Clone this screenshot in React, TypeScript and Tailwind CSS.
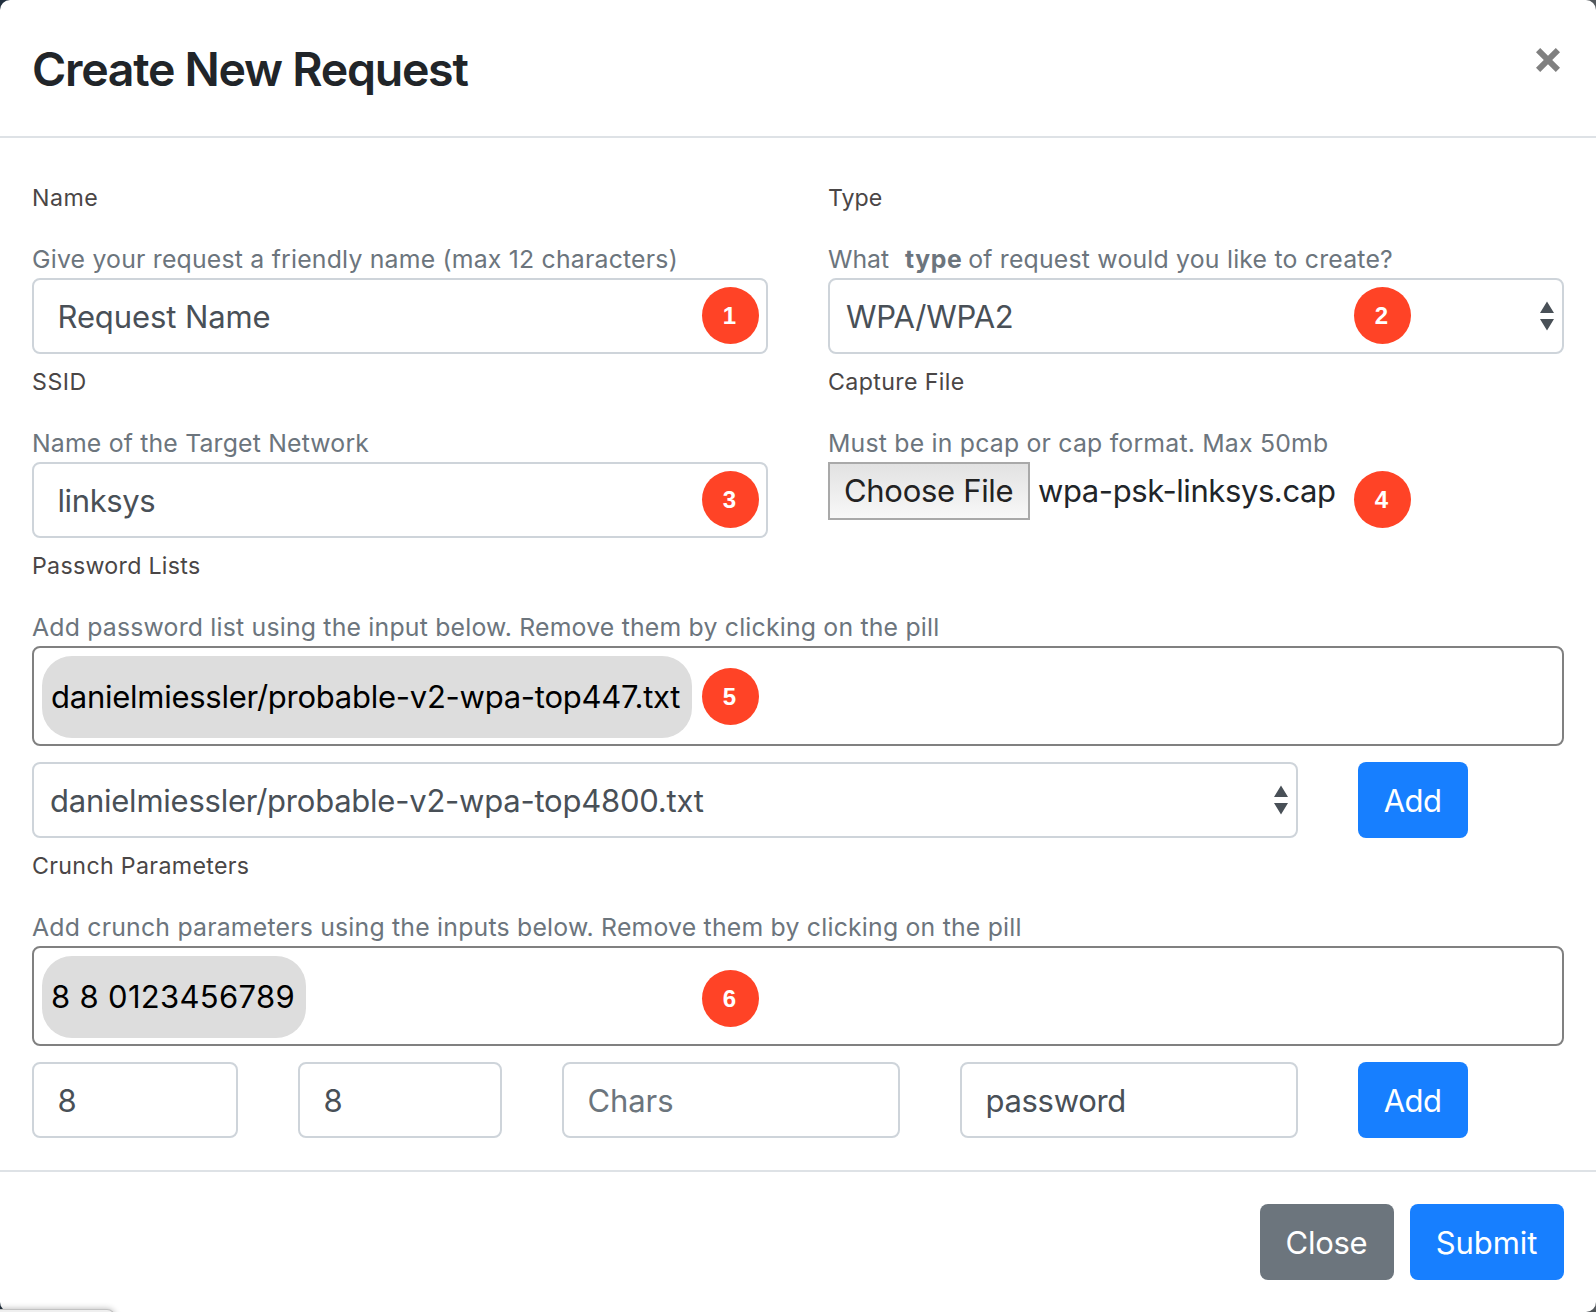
import type { ReactNode } from "react";

function Badge({ n, className }: { n: number; className: string }) {
  return (
    <span
      className={`absolute flex size-[57px] items-center justify-center rounded-full bg-[#ff4326] pt-px pr-[2px] font-['Liberation_Sans',sans-serif] text-[24px] leading-none font-bold text-white ${className}`}
    >
      {n}
    </span>
  );
}

function Group({
  label,
  help,
  labelClass = "tracking-[0.29px]",
  helpClass = "tracking-[0.21px]",
  children,
}: {
  label: string;
  help: ReactNode;
  labelClass?: string;
  helpClass?: string;
  children: ReactNode;
}) {
  return (
    <div className="flex flex-col">
      <label className={`text-[23.2px] leading-9 whitespace-nowrap text-[#4a4646] ${labelClass}`}>{label}</label>
      <small className={`mt-[25px] mb-px text-[24.8px] leading-9 whitespace-pre text-[#6c757d] ${helpClass}`}>{help}</small>
      {children}
    </div>
  );
}

function Field({ children, className = "" }: { children: ReactNode; className?: string }) {
  return (
    <div
      className={`relative flex h-[76px] items-center rounded-lg border-2 border-[#ced4da] bg-white pt-0.5 pl-[23.5px] text-[31px] whitespace-nowrap text-[#495057] ${className}`}
    >
      {children}
    </div>
  );
}

function Select({ children, className = "" }: { children: ReactNode; className?: string }) {
  return (
    <div
      className={`relative flex h-[76px] items-center justify-between rounded-lg border-2 border-[#ced4da] bg-white pr-[8.5px] text-[31px] whitespace-nowrap text-[#495057] ${className}`}
    >
      {children}
      <svg width="14" height="30" viewBox="0 0 14 30" fill="#495057">
        <path d="M7 0.5 L14 12 H0 Z M0 18 H14 L7 29.5 Z" />
      </svg>
    </div>
  );
}

function PillBox({ text, className, badge }: { text: string; className: string; badge: ReactNode }) {
  return (
    <div className="relative h-[100px] rounded-lg border-2 border-[#808080] py-2 pl-2">
      <span
        className={`flex h-[82px] items-center rounded-[30px] bg-[#ddd] text-[31px] whitespace-nowrap text-black ${className}`}
      >
        {text}
      </span>
      {badge}
    </div>
  );
}

function Button({ children, className }: { children: ReactNode; className: string }) {
  return (
    <button className={`flex h-[76px] items-center justify-center rounded-lg pt-0.5 pr-px text-[31px] text-white ${className}`}>
      {children}
    </button>
  );
}

export default function App() {
  return (
    <div className="relative h-[1312px] w-[1596px] overflow-hidden bg-linear-to-r from-[#22303f] to-[#53585c] font-['Inter',sans-serif]">
      <div className="flex h-full flex-col rounded-[10px] bg-white">
        <header className="flex h-[138px] items-start justify-between border-b-2 border-[#dee2e6] pr-9 pl-8">
          <h1 className="mt-[39px] text-[46.5px] leading-[60px] font-semibold tracking-[-1.28px] text-[#212529]">
            Create New Request
          </h1>
          <svg className="mt-12" width="24" height="24" viewBox="0 0 24 24" aria-label="Close">
            <path
              d="M4.2 0 L12 7.8 L19.8 0 L24 4.2 L16.2 12 L24 19.8 L19.8 24 L12 16.2 L4.2 24 L0 19.8 L7.8 12 L0 4.2 Z"
              fill="#808080"
            />
          </svg>
        </header>

        <main className="flex flex-col gap-2.5 px-8 pt-[42px] pb-8">
          <div className="grid grid-cols-2 gap-x-15 gap-y-2.5">
            <Group label="Name" labelClass="tracking-[0.5px]" help="Give your request a friendly name (max 12 characters)">
              <Field>
                <span className="tracking-[-0.1px]">Request Name</span>
                <Badge n={1} className="top-[7px] right-[7px]" />
              </Field>
            </Group>
            <Group
              label="Type"
              labelClass="tracking-normal"
              help={
                <>
                  <span className="tracking-normal">{"What  "}</span>
                  <b className="ml-0.5 font-bold tracking-[0.6px]">type</b>
                  <span className="-ml-[1.5px]"> of request would you like to create?</span>
                </>
              }
            >
              <Select className="pl-4">
                <span className="pt-0.5 tracking-[-0.26px]">WPA/WPA2</span>
                <Badge n={2} className="top-[7px] left-[524px]" />
              </Select>
            </Group>
            <Group label="SSID" labelClass="tracking-[0.5px]" help="Name of the Target Network" helpClass="tracking-[0.18px]">
              <Field>
                <span className="tracking-[-0.4px]">linksys</span>
                <Badge n={3} className="top-[7px] right-[7px]" />
              </Field>
            </Group>
            <Group label="Capture File" labelClass="tracking-[0.36px]" help="Must be in pcap or cap format. Max 50mb">
              <div className="relative flex items-start text-[31px] whitespace-nowrap">
                <button className="flex h-[58px] w-[202px] items-center border-2 border-[#a9a9a9] bg-linear-to-b from-[#e2e2e2] to-[#f8f8f8] pl-[14px] tracking-[-0.31px] text-[#222]">
                  Choose File
                </button>
                <span className="ml-2 leading-[58px] tracking-[-0.41px] text-[#212529]">wpa-psk-linksys.cap</span>
                <Badge n={4} className="top-[9px] left-[526px]" />
              </div>
            </Group>
          </div>

          <Group
            label="Password Lists"
            help="Add password list using the input below. Remove them by clicking on the pill"
            helpClass="tracking-[0.2px]"
          >
            <PillBox
              text="danielmiessler/probable-v2-wpa-top447.txt"
              className="w-[650px] pl-[9px] tracking-[-0.255px]"
              badge={<Badge n={5} className="top-[20px] left-[668px]" />}
            />
            <div className="mt-4 flex">
              <Select className="w-[1266px] pl-[16px]">
                <span className="pt-0.5 tracking-[-0.235px]">danielmiessler/probable-v2-wpa-top4800.txt</span>
              </Select>
              <Button className="ml-15 w-[110px] bg-[#177fff] tracking-[-0.6px]">Add</Button>
            </div>
          </Group>

          <Group
            label="Crunch Parameters"
            labelClass="tracking-[0.33px]"
            help="Add crunch parameters using the inputs below. Remove them by clicking on the pill"
          >
            <PillBox
              text="8 8 0123456789"
              className="w-[264px] pl-[9px] tracking-[0.31px]"
              badge={<Badge n={6} className="top-[22px] left-[668px]" />}
            />
            <div className="mt-4 flex">
              <Field className="w-[206px]">8</Field>
              <Field className="ml-15 w-[204px]">8</Field>
              <Field className="ml-15 w-[338px]">
                <span className="tracking-[-0.09px] text-[#6c757d]">Chars</span>
              </Field>
              <Field className="ml-15 w-[338px]">
                <span className="tracking-[-0.32px]">password</span>
              </Field>
              <Button className="ml-15 w-[110px] bg-[#177fff] tracking-[-0.6px]">Add</Button>
            </div>
          </Group>
        </main>

        <footer className="flex h-[142px] justify-end gap-4 border-t-2 border-[#dee2e6] px-8 pt-8">
          <Button className="w-[134px] bg-[#6c757d] tracking-[-0.28px]">Close</Button>
          <Button className="w-[154px] bg-[#177fff] tracking-[-0.11px]">Submit</Button>
        </footer>
      </div>
      <div className="absolute top-[1309px] -left-1 h-4 w-[119px] rounded-tr-lg border-t border-r border-[#c2c2c2] bg-[#efefef] shadow-[0_0_6px_rgba(0,0,0,0.3)]" />
    </div>
  );
}
